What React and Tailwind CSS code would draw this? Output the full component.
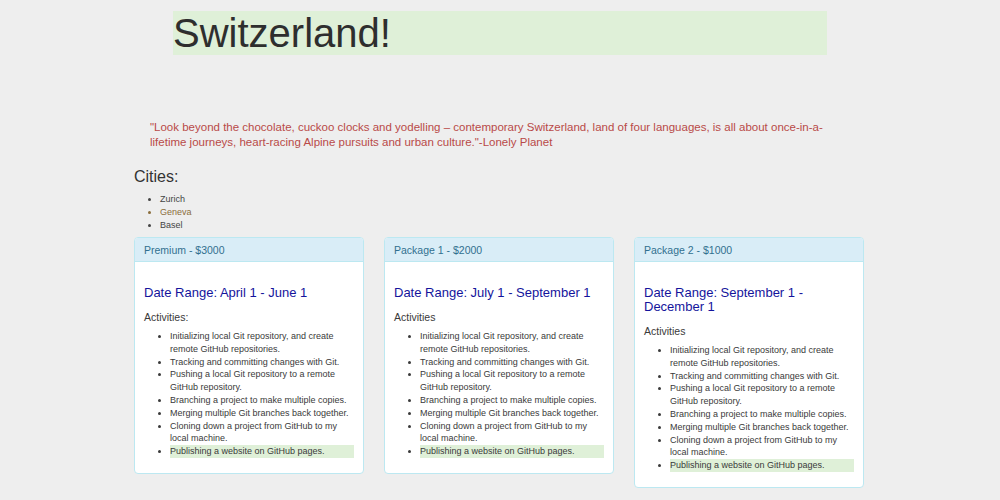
import React from "react";

const activities = [
  "Initializing local Git repository, and create remote GitHub repositories.",
  "Tracking and committing changes with Git.",
  "Pushing a local Git repository to a remote GitHub repository.",
  "Branching a project to make multiple copies.",
  "Merging multiple Git branches back together.",
  "Cloning down a project from GitHub to my local machine.",
];

const packages = [
  { title: "Premium - $3000", range: "Date Range: April 1 - June 1", act: "Activities:" },
  { title: "Package 1 - $2000", range: "Date Range: July 1 - September 1", act: "Activities" },
  { title: "Package 2 - $1000", range: "Date Range: September 1 - December 1", act: "Activities" },
];

function Card({ p }) {
  return (
    <div className="flex-1 self-start rounded-[4px] border border-[#bce8f1] bg-white">
      <div className="h-[24px] rounded-t-[3px] border-b border-[#bce8f1] bg-[#d9edf7] px-[9px] text-[10.5px] leading-[24px] text-[#31708f]">
        {p.title}
      </div>
      <div className="px-[9px] pt-[24px] pb-[15px]">
        <h3 className="text-[13px] leading-[14px] text-[#14149c]">{p.range}</h3>
        <div className="mt-[10px] text-[10.5px] leading-[15px] text-[#3a3a3a]">{p.act}</div>
        <ul className="mt-[5px] list-disc pl-[26px] text-[9px] leading-[12.8px] text-[#3a3a3a]">
          {activities.map((a) => (
            <li key={a}>{a}</li>
          ))}
          <li>
            <span className="block bg-[#dff0d8]">Publishing a website on GitHub pages.</span>
          </li>
        </ul>
      </div>
    </div>
  );
}

export default function App() {
  return (
    <div
      className="min-h-screen bg-[#eeeeee] pt-[11px] text-[#333]"
      style={{ fontFamily: '"Liberation Sans", Arial, sans-serif' }}
    >
      <h1 className="mx-auto h-[44px] w-[654px] bg-[#dff0d8] text-[40px] leading-[44px] font-normal text-[#2e2e2e]">
        Switzerland!
      </h1>
      <div className="mx-auto w-[732px] pr-[2px]">
        <p className="mt-[65px] px-[16px] text-[11.5px] leading-[15px] text-[#b94a48]">
          "Look beyond the chocolate, cuckoo clocks and yodelling – contemporary Switzerland, land of four languages, is all about once-in-a-lifetime journeys, heart-racing Alpine pursuits and urban culture."-Lonely Planet
        </p>
        <h2 className="mt-[17px] text-[16px] leading-[20px] font-normal text-[#333]">Cities:</h2>
        <ul className="mt-[6px] list-disc pl-[26px] text-[9px] leading-[13px] text-[#444]">
          <li>Zurich</li>
          <li className="text-[#8a6d3b]">Geneva</li>
          <li>Basel</li>
        </ul>
        <div className="mt-[5px] flex gap-[20px]">
          {packages.map((p) => (
            <Card key={p.title} p={p} />
          ))}
        </div>
      </div>
    </div>
  );
}
